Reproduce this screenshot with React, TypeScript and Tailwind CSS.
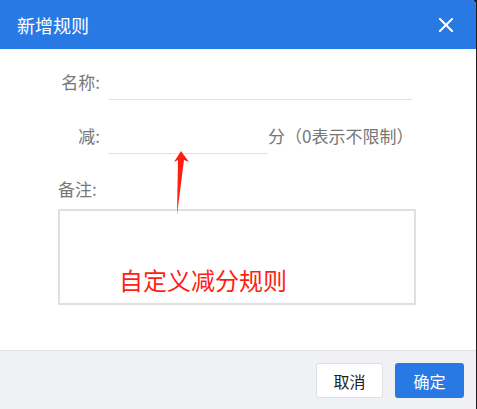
const font = { fontFamily: '"Microsoft YaHei", "Noto Sans CJK SC", "Noto Sans", sans-serif' };

function CloseIcon() {
  return (
    <svg width="14" height="14" viewBox="0 0 14 14" fill="none" stroke="white" strokeWidth="2" strokeLinecap="square">
      <line x1="1" y1="1" x2="13" y2="13" />
      <line x1="13" y1="1" x2="1" y2="13" />
    </svg>
  );
}

function RedArrow() {
  // annotation arrow pointing up to the "减" input
  return (
    <svg className="absolute left-[170px] top-[148px]" width="24" height="72" viewBox="170 148 24 72">
      <polygon points="181,151 189,162 184,160 177,215 178,160 174,162" fill="#ff1e12" />
    </svg>
  );
}

export default function App() {
  return (
    <div className="w-[477px] h-[409px] bg-[#1b1b1b] flex" style={font}>
      <div className="relative w-[476px] h-[409px] bg-white rounded-tr-[5px] overflow-hidden flex flex-col">
        {/* header */}
        <div className="h-[49px] shrink-0 bg-[#2979e5] flex items-center justify-between pl-[17px] pr-[23px]">
          <span className="text-[18px] text-white leading-none">新增规则</span>
          <CloseIcon />
        </div>

        {/* body */}
        <div className="flex-1 flex flex-col pt-[15px] pl-[56px]">
          <div className="flex items-center h-[36px]">
            <span className="w-[44px] text-right text-[17px] text-[#777]">名称:</span>
            <div className="ml-[8px] w-[305px] h-[36px] border-b border-[#e2e2e2] rounded-[2px]" />
          </div>

          <div className="flex items-center h-[36px] mt-[18px]">
            <span className="w-[44px] text-right text-[17px] text-[#777]">减:</span>
            <div className="ml-[8px] w-[160px] h-[36px] border-b border-[#e2e2e2] rounded-[2px]" />
            <span className="text-[17px] text-[#777]">分（0表示不限制）</span>
          </div>

          <div className="mt-[24px] ml-[2px] text-[17px] leading-[22px] text-[#777]">备注:</div>

          <div className="relative mt-[9px] ml-[2px] w-[358px] h-[96px] border-2 border-[#e0e0e0]">
            <span className="absolute left-[59px] top-[57px] text-[24px] leading-none text-[#ff1e12]">自定义减分规则</span>
          </div>
        </div>

        {/* footer */}
        <div className="h-[59px] shrink-0 bg-[#f0f1f5] border-t border-[#e2e3ea] flex justify-end items-start pt-[12px] pr-[12px] gap-[12px]">
          <button className="w-[67px] h-[35px] bg-white border border-[#dcdfe6] rounded-[3px] text-[16px] text-[#222]">取消</button>
          <button className="w-[69px] h-[35px] bg-[#2979e5] rounded-[3px] text-[16px] text-white">确定</button>
        </div>

        <RedArrow />
      </div>
    </div>
  );
}
